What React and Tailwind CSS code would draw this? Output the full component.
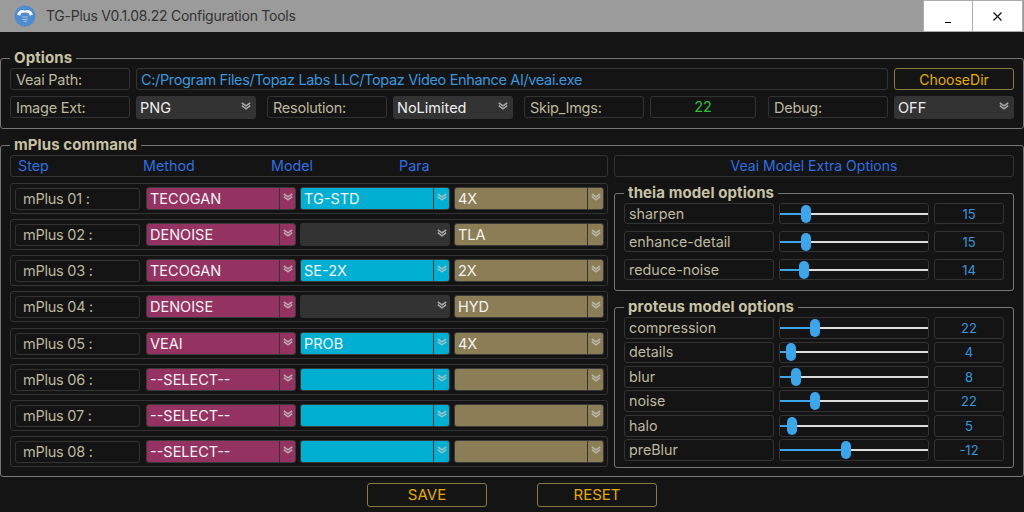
import React from 'react';

const methodCls = 'bg-[#943262]';
const modelCls = 'bg-[#00afd2]';
const paraCls = 'bg-[#8b7d55]';

const rows = [
  { name: 'mPlus 01 :', method: 'TECOGAN', model: 'TG-STD', para: '4X' },
  { name: 'mPlus 02 :', method: 'DENOISE', model: null, para: 'TLA' },
  { name: 'mPlus 03 :', method: 'TECOGAN', model: 'SE-2X', para: '2X' },
  { name: 'mPlus 04 :', method: 'DENOISE', model: null, para: 'HYD' },
  { name: 'mPlus 05 :', method: 'VEAI', model: 'PROB', para: '4X' },
  { name: 'mPlus 06 :', method: '--SELECT--', model: '', para: '' },
  { name: 'mPlus 07 :', method: '--SELECT--', model: '', para: '' },
  { name: 'mPlus 08 :', method: '--SELECT--', model: '', para: '' },
];

const theia = [
  { name: 'sharpen', value: '15', thumb: 21 },
  { name: 'enhance-detail', value: '15', thumb: 21 },
  { name: 'reduce-noise', value: '14', thumb: 19 },
];

const proteus = [
  { name: 'compression', value: '22', thumb: 30 },
  { name: 'details', value: '4', thumb: 6 },
  { name: 'blur', value: '8', thumb: 11 },
  { name: 'noise', value: '22', thumb: 30 },
  { name: 'halo', value: '5', thumb: 7 },
  { name: 'preBlur', value: '-12', thumb: 61 },
];

const Chevrons = () => (
  <svg width="10" height="8" viewBox="0 0 10 8" fill="none" stroke="#c4c4c4" strokeOpacity="0.8" strokeWidth="1.6">
    <path d="M0.8 1 L5 3.8 L9.2 1" />
    <path d="M0.8 3.6 L5 6.8 L9.2 3.6" />
  </svg>
);

const Box = ({ className = '', children }) => (
  <div className={`flex items-center border border-[#333] rounded-[3px] ${className}`}>{children}</div>
);

const Label = ({ className = '', children }) => (
  <Box className={`w-[120px] h-[22px] pl-[5px] pt-px text-[14.5px] tracking-[-0.25px] text-[#bdb89e] ${className}`}>{children}</Box>
);

// dark select, no divider in front of the arrow
const DarkSelect = ({ value, className = '' }) => (
  <div className={`flex items-center justify-between w-[120px] h-[23px] pl-[4px] pr-[5px] bg-[#333] rounded-[3px] text-[14.5px] text-[#eee] ${className}`}>
    <span>{value}</span>
    <span className="-mt-[3px] flex"><Chevrons /></span>
  </div>
);

const ColorSelect = ({ value, color }) => (
  <div className={`flex items-center w-[150px] h-[23px] border border-[#3a3a3a] rounded-[3px] text-[14.5px] text-[#f2f2f2] ${color}`}>
    <span className="flex-1 pl-[3px] whitespace-nowrap">{value}</span>
    <span className="flex items-center justify-center w-[16px] h-full border-l border-[#333]">
      <span className="-mt-[3px] flex"><Chevrons /></span>
    </span>
  </div>
);

const EmptyModel = () => (
  <div className="flex items-center justify-end w-[150px] h-[23px] pr-[3px] bg-[#333] rounded-[3px]">
    <span className="-mt-[3px] flex"><Chevrons /></span>
  </div>
);

const Slider = ({ thumb }) => (
  <Box className="w-[150px] h-full">
    <div className="h-[2px] bg-[#3da6ea]" style={{ width: thumb }} />
    <div className="shrink-0 w-[10px] h-[18px] rounded-full bg-[#3da6ea]" />
    <div className="flex-1 h-[2px] bg-[#ddd]" />
  </Box>
);

const OptionRow = ({ item, className }) => (
  <div className={`flex gap-[5px] ${className}`}>
    <Box className="w-[150px] h-full pl-[4px] text-[14.3px] text-[#bdb89e]">{item.name}</Box>
    <Slider thumb={item.thumb} />
    <Box className="w-[70px] h-full justify-center text-[13px] text-[#3a96de]">{item.value}</Box>
  </div>
);

const Legend = ({ children }) => (
  <legend className="h-5 px-[4px] text-[15px] tracking-[0.1px] leading-5 font-bold text-[#c8c2a4]">{children}</legend>
);

const ActionButton = ({ children, className = '' }) => (
  <div className={`flex items-center justify-center w-[120px] h-[24px] border border-[#8a7a4a] rounded-[3px] text-[15px] text-[#e6ac00] ${className}`}>
    {children}
  </div>
);

const App = () => {
  return (
    <div className="w-[1024px] h-[512px] overflow-hidden bg-[#141414] leading-[20px] font-['Inter',sans-serif]">
      {/* title bar */}
      <div className="flex items-center h-[32px] bg-[#9b9b9b]">
        <svg className="ml-[14px] -mt-[1px]" width="22" height="22" viewBox="0 0 22 22">
          <circle cx="11" cy="11" r="10.5" fill="#4f8bcf" />
          <path d="M3 9.5 C4.5 5.5 8 4.2 11 5.6 C14 4.2 17.5 5.5 19 9.5 L15.8 10.8 L14.6 8 L11 7.6 L7.4 8 L6.2 10.8 Z" fill="#f4f6f8" />
          <path d="M8 12 H14 M8.5 14.5 H13.5 M9.5 16.5 H12.5" stroke="#a9c5e4" strokeWidth="1.2" />
        </svg>
        <span className="ml-[10px] text-[14px] tracking-[-0.26px] text-[#333]">TG-Plus V0.1.08.22 Configuration Tools</span>
        <div className="ml-auto mr-px flex h-full">
          <div className="flex items-end justify-center w-[50px] h-[32px] pb-[8px] bg-white border border-[#aaa]">
            <span className="w-[6px] h-[1.5px] bg-black" />
          </div>
          <div className="flex items-center justify-center w-[50px] h-[32px] bg-white border border-l-0 border-[#aaa]">
            <svg width="9" height="9" viewBox="0 0 9 9" stroke="#111" strokeWidth="1.2"><path d="M0.5 0.5 L8.5 8.5 M8.5 0.5 L0.5 8.5" /></svg>
          </div>
        </div>
      </div>

      {/* options */}
      <fieldset className="mt-4 h-[81px] pl-[9px] border border-[#777] rounded-[3px]">
        <Legend>Options</Legend>
        <div className="flex gap-[6px]">
          <Label>Veai Path:</Label>
          <Box className="w-[752px] h-[22px] pl-[4px] pt-px text-[14.5px] tracking-[-0.35px] text-[#3a96de]">C:/Program Files/Topaz Labs LLC/Topaz Video Enhance AI/veai.exe</Box>
          <Box className="w-[120px] h-[22px] justify-center pt-px !border-[#8a7a4a] text-[14px] text-[#e6ac00]">ChooseDir</Box>
        </div>
        <div className="flex mt-[6px]">
          <Label>Image Ext:</Label>
          <DarkSelect value="PNG" className="ml-[6px]" />
          <Label className="ml-[11px]">Resolution:</Label>
          <DarkSelect value="NoLimited" className="ml-[6px]" />
          <Label className="ml-[11px]">Skip_Imgs:</Label>
          <Box className="w-[106px] h-[22px] ml-[6px] justify-center text-[14.5px] text-[#2fbf35]">22</Box>
          <Label className="ml-[12px]">Debug:</Label>
          <DarkSelect value="OFF" className="ml-[6px]" />
        </div>
      </fieldset>

      {/* mPlus command */}
      <fieldset className="mt-[6px] h-[342px] pl-[9px] border border-[#777] rounded-[3px]">
        <Legend>mPlus command</Legend>
        <div className="flex gap-[6px]">
          <div className="w-[598px]">
            <Box className="h-[22px] pl-[7px] text-[14.3px] text-[#2f6fe0]">
              <span className="w-[125px]">Step</span>
              <span className="w-[128px]">Method</span>
              <span className="w-[128px]">Model</span>
              <span>Para</span>
            </Box>
            <div className="flex flex-col gap-[5px] mt-[6px]">
              {rows.map((row, index) => (
                <Box key={row.name} className={`h-[31px] pl-[4px] ${index === 4 ? 'mt-px' : ''}`}>
                  <Box className="w-[125px] h-[22px] pl-[7px] text-[14.5px] tracking-[-0.25px] text-[#bdb89e]">{row.name}</Box>
                  <div className="flex gap-[4px] ml-[6px]">
                    <ColorSelect value={row.method} color={methodCls} />
                    {row.model === null ? <EmptyModel /> : <ColorSelect value={row.model} color={modelCls} />}
                    <ColorSelect value={row.para} color={paraCls} />
                  </div>
                </Box>
              ))}
            </div>
          </div>

          <div className="w-[400px]">
            <Box className="h-[22px] justify-center text-[14px] text-[#2f6fe0]">Veai Model Extra Options</Box>
            <fieldset className="mt-[6px] h-[108px] pl-[9px] border border-[#777] rounded-[3px]">
              <Legend>theia model options</Legend>
              <div className="flex flex-col gap-[7px]">
                {theia.map((item) => <OptionRow key={item.name} item={item} className="h-[21px]" />)}
              </div>
            </fieldset>
            <fieldset className="mt-[6px] h-[171px] pl-[9px] border border-[#777] rounded-[3px]">
              <Legend>proteus model options</Legend>
              <div className="flex flex-col gap-[2.6px] pt-[0.2px]">
                {proteus.map((item) => <OptionRow key={item.name} item={item} className="h-[21.8px]" />)}
              </div>
            </fieldset>
          </div>
        </div>
      </fieldset>

      {/* bottom buttons */}
      <div className="flex mt-[6px] ml-[367px] gap-[50px]">
        <ActionButton>SAVE</ActionButton>
        <ActionButton>RESET</ActionButton>
      </div>
    </div>
  );
};

export default App;
